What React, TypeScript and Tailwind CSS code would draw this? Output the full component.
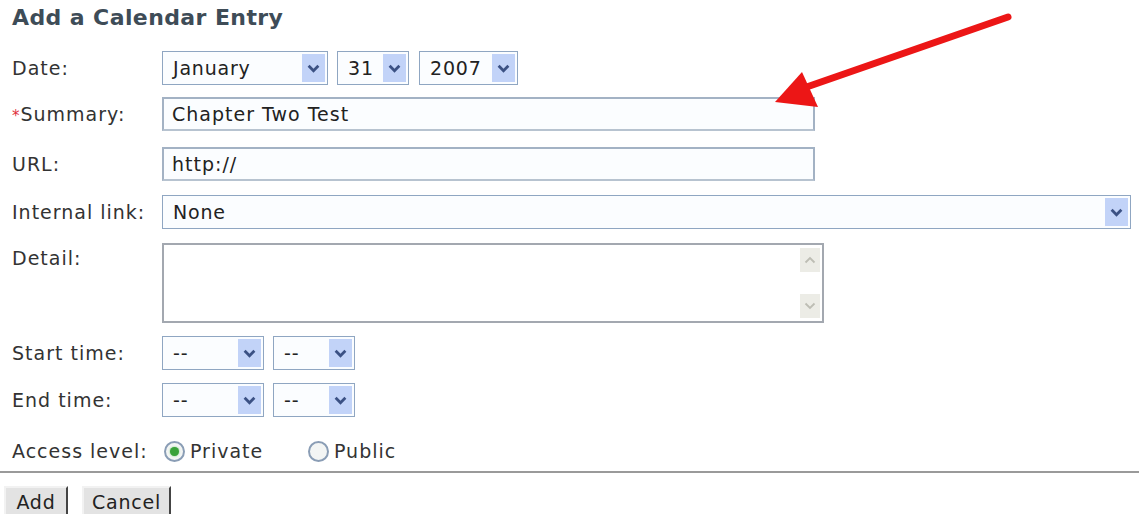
import React from "react";

const font = "font-['DejaVu_Sans',Verdana,sans-serif]";

const Chevron = ({ color = "#3b5184" }: { color?: string }): React.ReactElement => (
  <svg viewBox="0 0 12 8" className="h-[9px] w-[13px]">
    <path d="M1.5 1.5 L6 6 L10.5 1.5" fill="none" stroke={color} strokeWidth="2.6" />
  </svg>
);

type SelectProps = { value: string; className: string };

const Select = ({ value, className }: SelectProps): React.ReactElement => (
  <div className={`flex h-[34px] items-stretch border border-[#8fa6c2] bg-[#fbfdff] p-[2px] ${className}`}>
    <span className="flex flex-1 items-center pl-[8px] text-[19px] tracking-[0.8px] text-[#222]">{value}</span>
    <span className="flex w-[23px] items-center justify-center bg-[#c2d3f8]">
      <Chevron />
    </span>
  </div>
);

const TextInput = ({ value }: { value: string }): React.ReactElement => (
  <div className="flex h-[34px] w-[653px] items-center border-2 border-[#a3b2c4] border-b-[#b7c3d0] bg-[#fbfdff] pl-[8px] text-[19px] tracking-[1px] text-[#222]">
    {value}
  </div>
);

const Label = ({ children }: { children: React.ReactNode }): React.ReactElement => (
  <span className="w-[150px] shrink-0 text-[19px] tracking-[1px] text-[#333]">{children}</span>
);

const Radio = ({ checked }: { checked?: boolean }): React.ReactElement => (
  <span className="flex h-[21px] w-[21px] items-center justify-center rounded-full border-2 border-[#8a9db5] bg-[#f3f5f4]">
    {checked ? <span className="h-[9px] w-[9px] rounded-full bg-[#3aa23a] shadow-[0_0_2px_#6cc86c]" /> : null}
  </span>
);

const DetailBox = (): React.ReactElement => (
  <div className="flex h-[80px] w-[662px] border-2 border-[#a3a8b0] bg-white">
    <div className="flex-1" />
    <div className="flex w-[22px] flex-col justify-between bg-white py-[3px] pr-[2px]">
      <span className="flex h-[24px] items-center justify-center bg-[#ecece6]">
        <svg viewBox="0 0 12 8" className="h-[8px] w-[12px]">
          <path d="M1.5 6.5 L6 2 L10.5 6.5" fill="none" stroke="#bdbdb4" strokeWidth="1.8" />
        </svg>
      </span>
      <span className="flex h-[24px] items-center justify-center bg-[#ecece6]">
        <svg viewBox="0 0 12 8" className="h-[8px] w-[12px]">
          <path d="M1.5 1.5 L6 6 L10.5 1.5" fill="none" stroke="#bdbdb4" strokeWidth="1.8" />
        </svg>
      </span>
    </div>
  </div>
);

const PointerArrow = (): React.ReactElement => (
  <svg className="pointer-events-none absolute left-0 top-0" width="1139" height="514">
    <line x1="1008" y1="17" x2="798" y2="90" stroke="#ec1616" strokeWidth="7" strokeLinecap="round" />
    <polygon points="775,102 802,72 818,107" fill="#ec1616" />
  </svg>
);

const App = (): React.ReactElement => {
  return (
    <div className={`relative h-[514px] w-[1139px] overflow-hidden bg-white ${font}`}>
      <div className="flex flex-col">
        <h1 className="ml-[12px] mt-[3px] text-[22px] font-bold leading-[30px] tracking-[0.4px] text-[#3e4c57]">
          Add a Calendar Entry
        </h1>

        <div className="ml-[12px] mt-[18px] flex items-center">
          <Label>Date:</Label>
          <Select value="January" className="w-[166px]" />
          <Select value="31" className="ml-[9px] w-[72px]" />
          <Select value="2007" className="ml-[10px] w-[99px]" />
        </div>

        <div className="ml-[12px] mt-[12px] flex items-center">
          <Label>
            <span className="text-[15px] text-[#e0303c]">*</span>Summary:
          </Label>
          <TextInput value="Chapter Two Test" />
        </div>

        <div className="ml-[12px] mt-[16px] flex items-center">
          <Label>URL:</Label>
          <TextInput value="http://" />
        </div>

        <div className="ml-[12px] mt-[14px] flex items-center">
          <Label>Internal link:</Label>
          <Select value="None" className="w-[969px]" />
        </div>

        <div className="ml-[12px] mt-[14px] flex items-start">
          <span className="w-[150px] shrink-0 pt-[1px] text-[19px] tracking-[1px] text-[#333]">Detail:</span>
          <DetailBox />
        </div>

        <div className="ml-[12px] mt-[13px] flex items-center">
          <Label>Start time:</Label>
          <Select value="--" className="w-[102px]" />
          <Select value="--" className="ml-[9px] w-[82px]" />
        </div>

        <div className="ml-[12px] mt-[13px] flex items-center">
          <Label>End time:</Label>
          <Select value="--" className="w-[102px]" />
          <Select value="--" className="ml-[9px] w-[82px]" />
        </div>

        <div className="ml-[12px] mt-[20px] flex h-[28px] items-center text-[19px] tracking-[1px] text-[#333]">
          <span className="w-[152px] shrink-0">Access level:</span>
          <Radio checked />
          <span className="ml-[5px] w-[118px]">Private</span>
          <Radio />
          <span className="ml-[5px]">Public</span>
        </div>

        <div className="mt-[6px] h-[2px] w-full bg-[#9a9a9a]" />

        <div className="ml-[4px] mt-[13px] flex gap-[14px] text-[19px] tracking-[0.8px] text-[#222]">
          <button className="h-[30px] w-[64px] border-2 border-[#f2f2f2] border-b-[#555] border-r-[#444] bg-[#e3e3e3]">
            Add
          </button>
          <button className="h-[30px] w-[89px] border-2 border-[#f2f2f2] border-b-[#555] border-r-[#444] bg-[#e3e3e3]">
            Cancel
          </button>
        </div>
      </div>
      <PointerArrow />
    </div>
  );
};

export default App;
